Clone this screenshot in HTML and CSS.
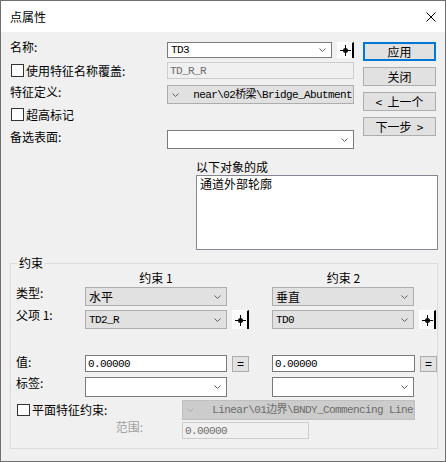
FILE: index.html
```html
<!DOCTYPE html>
<html lang="zh-CN">
<head>
<meta charset="utf-8">
<title>点属性</title>
<link rel="stylesheet" href="styles.css">
</head>
<body>
<div class="window">
  <div class="titlebar">
    <span class="title">点属性</span>
    <svg class="close" width="10" height="10" viewBox="0 0 10 10"><path d="M0.5 0.5L9.5 9.5M9.5 0.5L0.5 9.5" stroke="#000" stroke-width="1" fill="none"/></svg>
  </div>
  <div class="content">
    <div class="top">
      <div class="form">
        <div class="row r1">
          <span class="lbl up">名称:</span>
          <div class="combo edit w165"><span class="val mono">TD3</span><svg class="chev" width="7" height="4" viewBox="0 0 7 4"><polyline points="0.5,0.5 3.5,3.5 6.5,0.5" fill="none" stroke="#606060"/></svg></div>
          <span class="pick"><svg width="11" height="11" viewBox="0 0 11 11"><path d="M0 5.5H11M5.5 0V11" stroke="#000" stroke-width="1"/><circle cx="5.5" cy="5.5" r="1.8" fill="none" stroke="#000" stroke-width="1.4"/></svg></span>
        </div>
        <div class="row r2">
          <span class="chk"><span class="cbox"></span>使用特征名称覆盖:</span>
          <div class="field dis w187"><span class="mono">TD_R_R</span></div>
        </div>
        <div class="row r3">
          <span class="lbl">特征定义:</span>
          <div class="combo lchev w187"><svg class="chev" width="7" height="4" viewBox="0 0 7 4"><polyline points="0.5,0.5 3.5,3.5 6.5,0.5" fill="none" stroke="#606060"/></svg><span class="rtext mono">near\02桥梁\Bridge_Abutment</span></div>
        </div>
        <div class="row r4">
          <span class="chk"><span class="cbox"></span>超高标记</span>
        </div>
        <div class="row r5">
          <span class="lbl">备选表面:</span>
          <div class="combo edit w187"><span class="val"></span><svg class="chev" width="7" height="4" viewBox="0 0 7 4"><polyline points="0.5,0.5 3.5,3.5 6.5,0.5" fill="none" stroke="#606060"/></svg></div>
        </div>
      </div>
      <div class="buttons">
        <button class="btn default">应用</button>
        <button class="btn">关闭</button>
        <button class="btn">&lt;  上一个</button>
        <button class="btn">下一步  &gt;</button>
      </div>
    </div>

    <div class="objects">
      <div class="objlabel">以下对象的成</div>
      <div class="listbox">通道外部轮廓</div>
    </div>

    <fieldset class="group">
      <legend>约束</legend>
      <div class="crow hdr">
        <span class="h1">约束 1</span>
        <span class="h2">约束 2</span>
      </div>
      <div class="crow rtype">
        <span class="glbl">类型:</span>
        <div class="combo"><span class="val">水平</span><svg class="chev" width="7" height="4" viewBox="0 0 7 4"><polyline points="0.5,0.5 3.5,3.5 6.5,0.5" fill="none" stroke="#606060"/></svg></div>
        <span class="gap"></span>
        <div class="combo w142"><span class="val">垂直</span><svg class="chev" width="7" height="4" viewBox="0 0 7 4"><polyline points="0.5,0.5 3.5,3.5 6.5,0.5" fill="none" stroke="#606060"/></svg></div>
      </div>
      <div class="crow rparent">
        <span class="glbl up">父项 1:</span>
        <div class="combo"><span class="val mono">TD2_R</span><svg class="chev" width="7" height="4" viewBox="0 0 7 4"><polyline points="0.5,0.5 3.5,3.5 6.5,0.5" fill="none" stroke="#606060"/></svg></div>
        <span class="pick gpick"><svg width="11" height="11" viewBox="0 0 11 11"><path d="M0 5.5H11M5.5 0V11" stroke="#000" stroke-width="1"/><circle cx="5.5" cy="5.5" r="1.8" fill="none" stroke="#000" stroke-width="1.4"/></svg></span>
        <div class="combo w142"><span class="val mono">TD0</span><svg class="chev" width="7" height="4" viewBox="0 0 7 4"><polyline points="0.5,0.5 3.5,3.5 6.5,0.5" fill="none" stroke="#606060"/></svg></div>
        <span class="pick gpick2"><svg width="11" height="11" viewBox="0 0 11 11"><path d="M0 5.5H11M5.5 0V11" stroke="#000" stroke-width="1"/><circle cx="5.5" cy="5.5" r="1.8" fill="none" stroke="#000" stroke-width="1.4"/></svg></span>
      </div>
      <div class="crow rvalue">
        <span class="glbl zero">值:</span>
        <div class="field"><span class="mono">0.00000</span></div>
        <span class="eq">=</span>
        <div class="field"><span class="mono">0.00000</span></div>
        <span class="eq">=</span>
      </div>
      <div class="crow rtag">
        <span class="glbl">标签:</span>
        <div class="combo edit"><span class="val"></span><svg class="chev" width="7" height="4" viewBox="0 0 7 4"><polyline points="0.5,0.5 3.5,3.5 6.5,0.5" fill="none" stroke="#606060"/></svg></div>
        <span class="gap"></span>
        <div class="combo edit"><span class="val"></span><svg class="chev" width="7" height="4" viewBox="0 0 7 4"><polyline points="0.5,0.5 3.5,3.5 6.5,0.5" fill="none" stroke="#606060"/></svg></div>
      </div>
      <div class="prow rplane">
        <span class="chk plane"><span class="cbox small"></span>平面特征约束:</span>
        <div class="combo lchev disabled"><svg class="chev" width="7" height="4" viewBox="0 0 7 4"><polyline points="0.5,0.5 3.5,3.5 6.5,0.5" fill="none" stroke="#a8a8a8"/></svg><span class="rtext mono">Linear\01边界\BNDY_Commencing Line</span></div>
      </div>
      <div class="prow rrange">
        <span class="rlbl">范围:</span>
        <div class="field dis w127"><span class="mono">0.00000</span></div>
      </div>
    </fieldset>
  </div>
</div>
</body>
</html>
```

FILE: styles.css
```css
* { box-sizing: border-box; }
html, body { margin: 0; padding: 0; }
body {
  background: #f0f0f0;
  font-family: "Noto Sans CJK SC", "Noto Sans", sans-serif;
  font-size: 12px;
  color: #000;
}
.window {
  width: 446px;
  height: 462px;
  border: 1px solid #707070;
  background: #f0f0f0;
  display: flex;
  flex-direction: column;
  overflow: hidden;
}
.titlebar {
  height: 31px;
  flex: none;
  background: #fff;
  display: flex;
  align-items: center;
  justify-content: space-between;
  padding: 0 9px 0 9px;
}
.title { line-height: 14px; }
.close { display: block; }

.content { padding: 10px 0 0 9px; }

.mono {
  font-family: "Liberation Mono", "Noto Sans CJK SC", monospace;
  font-size: 11px;
  letter-spacing: -0.6px;
}

/* top form */
.top { display: flex; gap: 9px; }
.form { width: 344px; display: flex; flex-direction: column; }
.row { display: flex; align-items: flex-start; }
.r1 { height: 16px; }
.r2 { height: 17px; margin-top: 4px; align-items: center; }
.r3 { height: 19px; margin-top: 6px; }
.r4 { height: 13px; margin-top: 4px; align-items: center; }
.r5 { height: 19px; margin-top: 9px; }
.lbl { width: 157px; flex: none; line-height: 14px; white-space: nowrap; }
.lbl.up { margin-top: -2px; }

.chk { display: flex; align-items: center; gap: 2px; line-height: 14px; white-space: nowrap; }
.row .chk { width: 157px; flex: none; }
.cbox {
  width: 13px;
  height: 13px;
  border: 1px solid #333;
  background: #fff;
  margin-left: 1px;
  flex: none;
}
.cbox.small { width: 13px; height: 12px; }

.combo {
  display: flex;
  align-items: center;
  height: 100%;
  border: 1px solid #adadad;
  background: #e1e1e1;
  white-space: nowrap;
}
.combo.edit { background: #fff; border-color: #7a7a7a; }
.combo.disabled { background: #cccccc; border-color: #bfbfbf; color: #6d6d6d; }
.combo .val { flex: 1; padding-left: 3px; line-height: 16px; }
.chev { flex: none; margin-right: 5px; display: block; }
.combo.lchev .chev { margin: 0 0 0 4px; }
.rtext {
  flex: 1;
  display: flex;
  justify-content: flex-end;
  padding-right: 1px;
  line-height: 16px;
}

.field {
  display: flex;
  align-items: center;
  height: 100%;
  border: 1px solid #7a7a7a;
  background: #fff;
  padding-left: 2px;
  white-space: nowrap;
}
.field.dis { background: #f0f0f0; border-color: #cccccc; color: #6d6d6d; }

.w165 { width: 165px; }
.w187 { width: 187px; }
.w142 { width: 142px; }
.w127 { width: 127px; }

.pick {
  width: 17px;
  height: 100%;
  margin-left: 5px;
  flex: none;
  display: flex;
  align-items: center;
  justify-content: center;
  background: #fbfbfb;
  border-left: 2px solid #fff;
  border-top: 1px solid #fff;
  border-right: 2px solid #000;
}

/* buttons */
.buttons { width: 73px; display: flex; flex-direction: column; gap: 6px; }
.btn {
  height: 19px;
  border: 1px solid #adadad;
  background: #e1e1e1;
  font: inherit;
  font-size: 12px;
  line-height: 14px;
  padding: 0;
  color: #000;
  display: flex;
  align-items: center;
  justify-content: center;
  white-space: pre;
}
.btn.default { border: 2px solid #0078d7; }

/* objects list */
.objects { margin: 11px 0 0 186px; width: 242px; }
.objlabel { line-height: 14px; }
.listbox {
  margin-top: 1px;
  height: 75px;
  border: 1px solid #828790;
  background: #fff;
  padding: 1px 0 0 3px;
  line-height: 14px;
}

/* constraint group */
.group {
  margin: 6px 0 0 0;
  width: 428px;
  padding: 1px 0 9px 5px;
  border: 1px solid #dcdcdc;
  min-inline-size: 0;
}
.group legend { padding: 0 2px; margin-left: 1px; line-height: 14px; }

.crow {
  display: grid;
  grid-template-columns: 69px 142px 45px 143px 22px;
}
.hdr { height: 14px; line-height: 14px; }
.hdr .h1 { grid-column: 2; text-align: center; }
.hdr .h2 { grid-column: 4; text-align: center; }
.rtype { height: 19px; margin-top: 2px; }
.rparent { height: 19px; margin-top: 4px; }
.rvalue { height: 17px; margin-top: 26px; }
.rtag { height: 20px; margin-top: 5px; }
.glbl { align-self: start; line-height: 14px; margin-top: -1px; white-space: nowrap; }
.glbl.up { margin-top: -2px; }
.glbl.zero { margin-top: 0; }
.crow .combo { width: 142px; }
.gpick { margin-left: 5px; }
.gpick2 { margin-left: 4px; }
.eq {
  width: 17px;
  height: 16px;
  margin: 1px 0 0 5px;
  align-self: start;
  border: 1px solid #adadad;
  background: #e1e1e1;
  display: flex;
  align-items: center;
  justify-content: center;
  font-family: "Liberation Sans", sans-serif;
  font-size: 12px;
  line-height: 1;
}

.prow { display: grid; grid-template-columns: 166px 233px; }
.rplane { height: 20px; margin-top: 3px; }
.rrange { height: 17px; margin-top: 2px; }
.chk.plane { align-self: center; }
.rlbl {
  align-self: start;
  margin-top: -2px;
  line-height: 14px;
  text-align: right;
  padding-right: 39px;
  color: #a0a0a0;
}
```
